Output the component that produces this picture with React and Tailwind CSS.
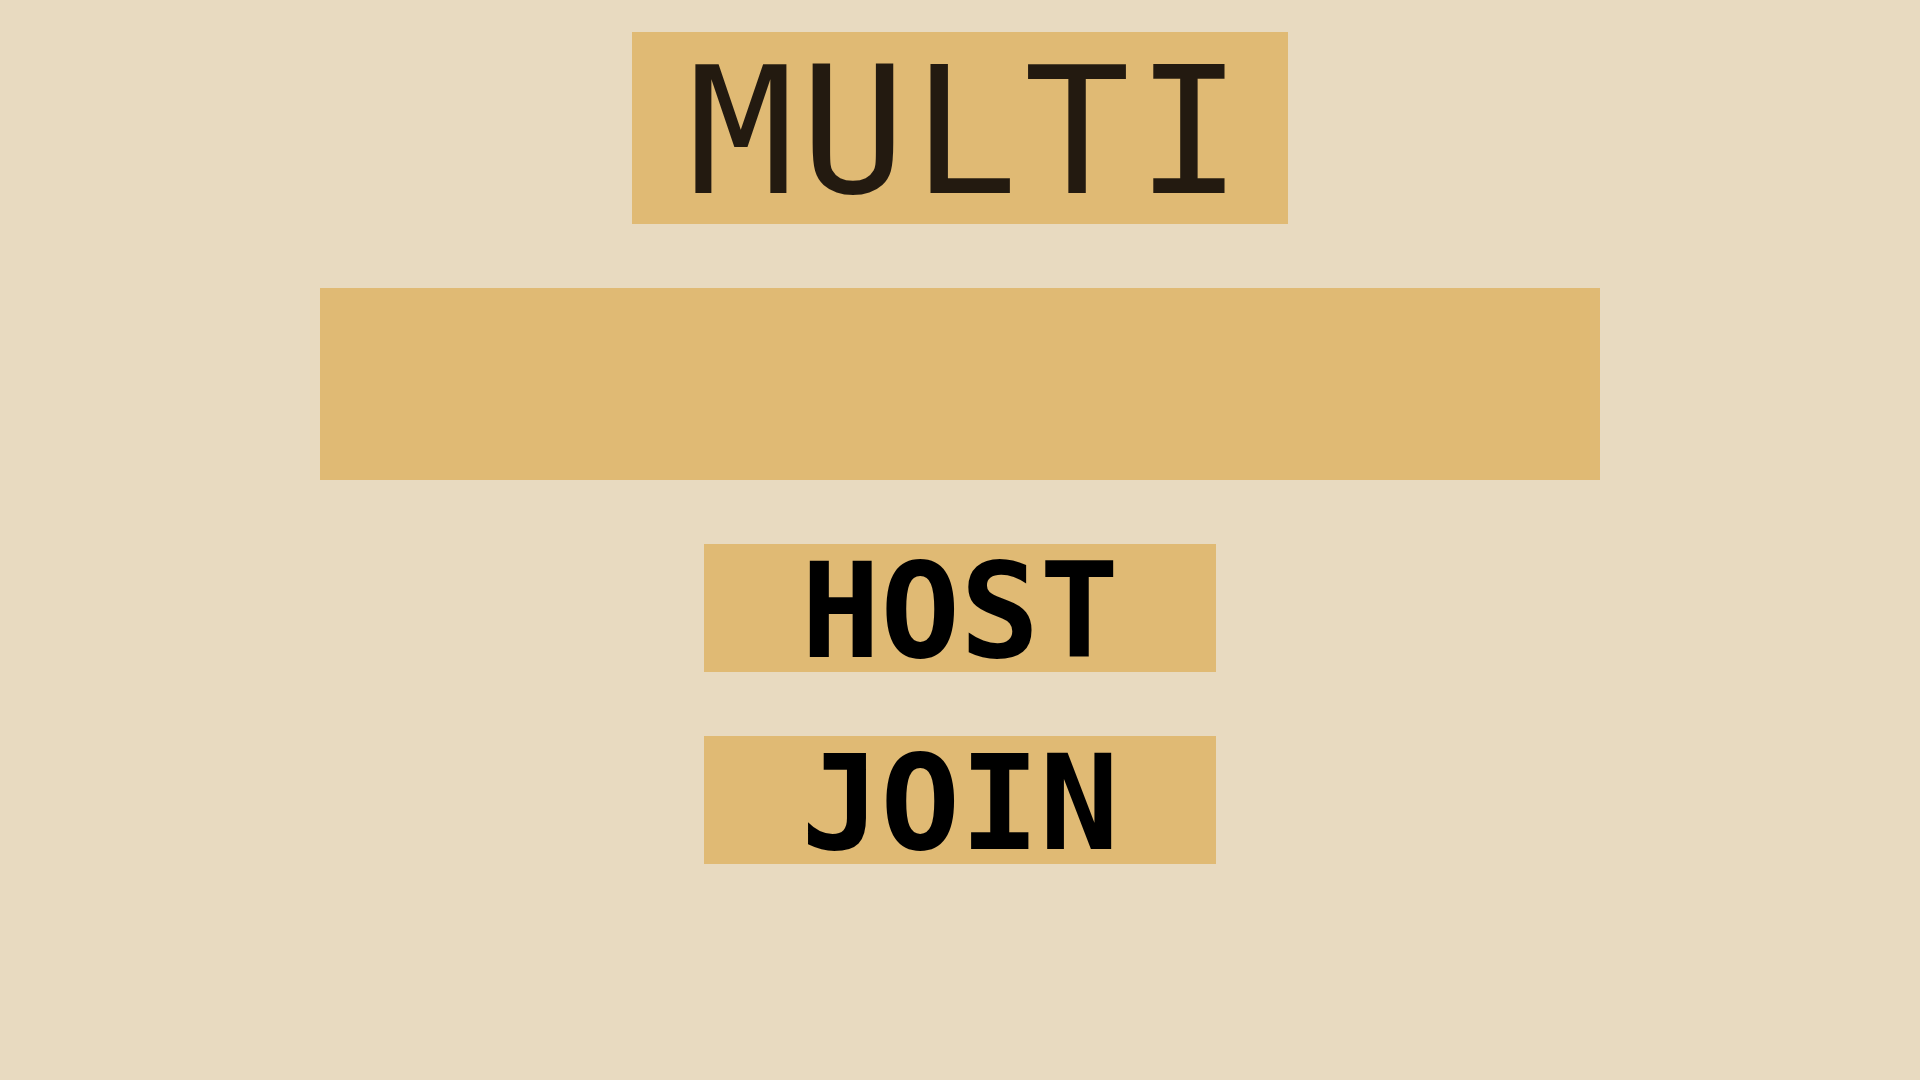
export default function App() {
  const font = "[font-family:'DejaVu_Sans_Mono','Liberation_Mono',monospace]";
  return (
    <div className="min-h-screen w-full bg-[#e8dac0] flex flex-col items-center pt-[32px] gap-[64px]">
      <div className="w-[656px] h-[192px] bg-[#e0ba74] flex items-center justify-center">
        <span className={`${font} text-[176px] leading-none tracking-[6px] pl-[16px] pt-[10px] text-[#231a10] uppercase`}>MULTI</span>
      </div>
      <div className="w-[1280px] h-[192px] bg-[#e0ba74]" />
      <button className="w-[512px] h-[128px] bg-[#e0ba74] flex items-center justify-center">
        <span className={`${font} text-[132px] leading-none font-bold pt-[6px] text-black`}>HOST</span>
      </button>
      <button className="w-[512px] h-[128px] bg-[#e0ba74] flex items-center justify-center">
        <span className={`${font} text-[132px] leading-none font-bold pt-[6px] text-black`}>JOIN</span>
      </button>
    </div>
  );
}
